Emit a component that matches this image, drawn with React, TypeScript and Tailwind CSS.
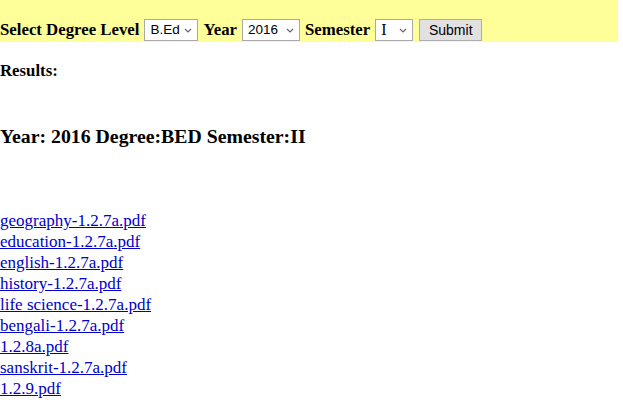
import React from 'react';

const files = [
  'geography-1.2.7a.pdf',
  'education-1.2.7a.pdf',
  'english-1.2.7a.pdf',
  'history-1.2.7a.pdf',
  'life science-1.2.7a.pdf',
  'bengali-1.2.7a.pdf',
  '1.2.8a.pdf',
  'sanskrit-1.2.7a.pdf',
  '1.2.9.pdf',
];

function Chevron() {
  return (
    <svg width="8" height="5" viewBox="0 0 8 5" className="ml-auto shrink-0">
      <path d="M1 1l3 3 3-3" fill="none" stroke="#666" strokeWidth="1.2" />
    </svg>
  );
}

function FakeSelect({ value, width, serif }: { value: string; width: string; serif?: boolean }) {
  return (
    <div
      className={`flex items-center h-[22px] ${width} border border-[#a9a9a9] bg-white pl-[5px] pr-[5px] font-normal text-black ${serif ? 'text-[16px]' : 'text-[13.5px]'}`}
      style={{ fontFamily: serif ? '"Liberation Serif", serif' : '"Liberation Sans", Arial, sans-serif' }}
    >
      <span>{value}</span>
      <Chevron />
    </div>
  );
}

export default function App() {
  return (
    <div className="bg-white min-h-[402px] text-black" style={{ fontFamily: '"Liberation Serif", "Times New Roman", serif' }}>
      <div className="w-[618px] h-[42px] bg-[#ffff99] flex items-end pb-[1px]">
        <div className="flex items-center gap-[5px] text-[16.8px] font-bold h-[22px]">
          <span>Select Degree Level</span>
          <FakeSelect value="B.Ed" width="w-[54px]" />
          <span>Year</span>
          <FakeSelect value="2016" width="w-[58px]" />
          <span>Semester</span>
          <FakeSelect value="I" width="w-[38px]" serif />
          <div
            className="ml-[1px] h-[22px] w-[63px] flex items-center justify-center border border-[#adadad] bg-[#e1e1e1] text-[14px] font-normal"
            style={{ fontFamily: '"Liberation Sans", Arial, sans-serif' }}
          >
            Submit
          </div>
        </div>
      </div>
      <div className="mt-[19px] text-[16.8px] font-bold leading-[19px]">Results:</div>
      <h3 className="mt-[45px] text-[19.8px] font-bold leading-[22px]">Year: 2016 Degree:BED Semester:II</h3>
      <div className="mt-[63px] flex flex-col">
        {files.map((f) => (
          <a key={f} href="#" className="text-[17px] leading-[21px] text-[#0000cc] underline">
            {f}
          </a>
        ))}
      </div>
    </div>
  );
}
